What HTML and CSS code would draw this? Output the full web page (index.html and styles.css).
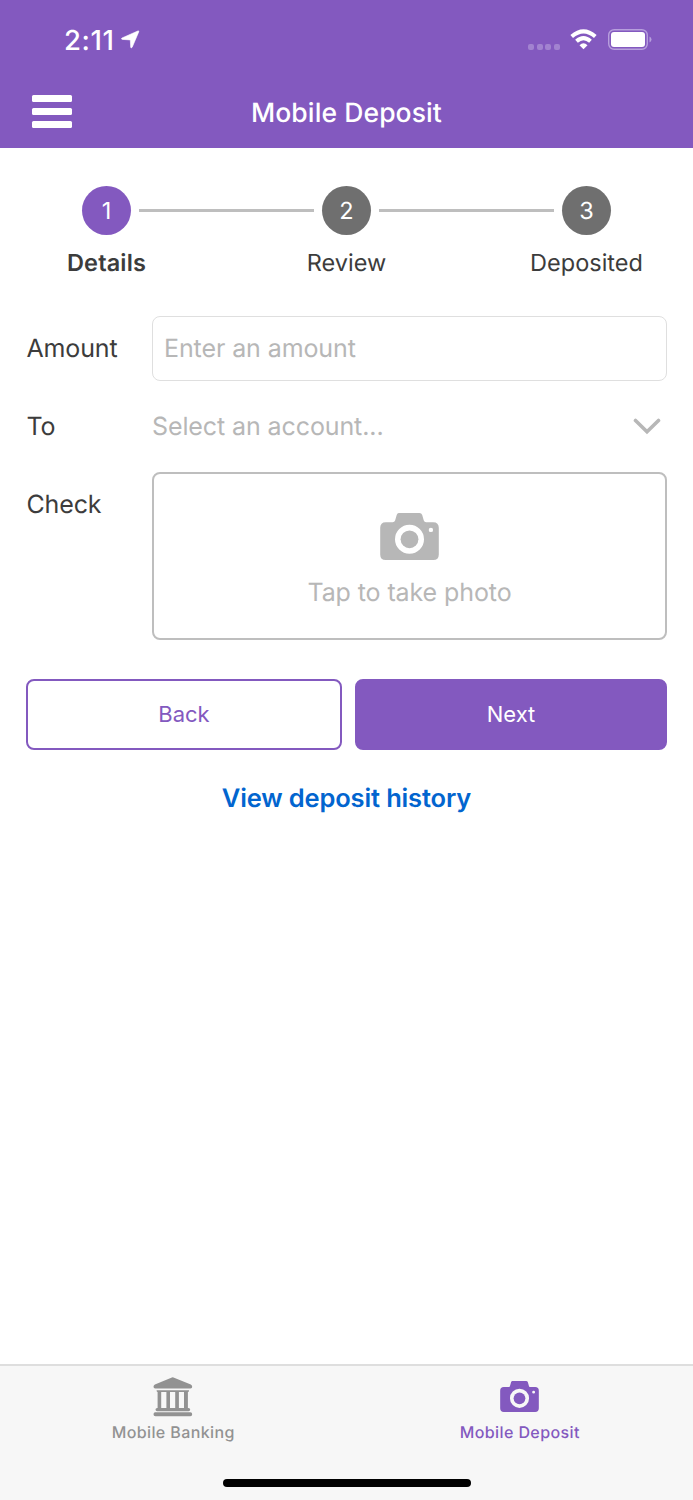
FILE: index.html
```html
<!DOCTYPE html>
<html lang="en">
<head>
<meta charset="utf-8">
<title>Mobile Deposit</title>
<link rel="stylesheet" href="styles.css">
</head>
<body>
<svg width="0" height="0" class="defs" aria-hidden="true">
  <symbol id="camera" viewBox="0 0 58.6 47">
    <path fill-rule="evenodd" d="M18.6 0H39.3Q41.3 0 42 2L43.6 7.4Q44.1 9.2 46 9.2H53Q58.6 9.2 58.6 14.8V41.4Q58.6 47 53 47H5.6Q0 47 0 41.4V14.8Q0 9.2 5.6 9.2H12.400Q14.300 9.200 14.900 7.400L16.500 2Q17.100 0 18.600 0ZM29.300 11.800A14.500 14.500 0 1 0 29.300 40.800A14.500 14.500 0 1 0 29.300 11.800ZM50.700 14.700A2.200 2.200 0 1 0 50.700 19.100A2.200 2.200 0 1 0 50.700 14.700Z"/>
    <circle cx="29.300" cy="26.300" r="8.900"/>
  </symbol>
</svg>
<div class="screen">
  <header class="header">
    <div class="status">
      <span class="time">2:11</span>
      <svg class="location" width="19" height="19" viewBox="0 0 19 19"><path d="M1 8L16.800 1Q18.200.5 17.700 1.900L11.200 17.200Q10.200 18.800 9.700 17.200L9.300 9.900L1.300 9.400Q-.2 8.800 1 8Z"/></svg>
      <span class="signal"><i></i><i></i><i></i><i></i></span>
      <svg class="wifi" width="27" height="21" viewBox="0 0 27 21"><path d="M1.700 7.400Q13.500-2.800 25.300 7.400M6.500 12.300Q13.500 6 20.500 12.300" fill="none" stroke="#fff" stroke-width="4"/><path d="M9.500 16.200Q13.500 12.400 17.500 16.200L13.500 20.300Z" fill="#fff"/></svg>
      <svg class="battery" width="44" height="21" viewBox="0 0 44 21"><rect x=".7" y=".7" width="38.600" height="19.600" rx="5.500" fill="none" stroke="#b79fdd" stroke-width="1.400"/><rect x="3" y="3" width="34" height="15" rx="3" fill="#fff"/><path d="M41.500 7.500Q43.500 8.500 43.500 10.500T41.500 13.500Z" fill="#b79fdd"/></svg>
    </div>
    <div class="nav">
      <button class="menu" aria-label="Menu"><i></i><i></i><i></i></button>
      <h1 class="title">Mobile Deposit</h1>
    </div>
  </header>
  <main class="main">
    <ol class="steps">
      <li class="step current"><span class="num">1</span><span class="step-label">Details</span></li>
      <li class="line"></li>
      <li class="step"><span class="num">2</span><span class="step-label">Review</span></li>
      <li class="line"></li>
      <li class="step"><span class="num">3</span><span class="step-label">Deposited</span></li>
    </ol>
    <div class="form">
      <span class="label">Amount</span>
      <div class="input">Enter an amount</div>
      <span class="label to">To</span>
      <div class="select"><span>Select an account...</span>
        <svg width="28" height="18" viewBox="0 0 28 18"><path d="M2.500 2.500L14 13.800L25.500 2.500" fill="none" stroke="#b7b7b7" stroke-width="3.600" stroke-linecap="round"/></svg>
      </div>
      <span class="label">Check</span>
      <div class="photo">
        <svg class="photo-icon"><use href="#camera"/></svg>
        <span class="tap">Tap to take photo</span>
      </div>
    </div>
    <div class="actions">
      <button class="btn back">Back</button>
      <button class="btn next">Next</button>
    </div>
    <a class="history">View deposit history</a>
  </main>
  <footer class="footer">
    <nav class="tabs">
      <a class="tab">
        <svg class="tab-icon bank" width="40" height="40" viewBox="0 0 40 40"><path d="M19.700.2Q20.100.2 20.500.4L37.800 7.500Q39.200 8.200 39.200 9.700Q39.200 11.500 37.500 11.500H2.200Q.5 11.500 .5 9.700Q.5 8.200 1.900 7.500L18.900.4Q19.300.2 19.700.2ZM3.600 13.200H36.100Q36.300 15 35 15H34.900V31H35.500Q37.200 31 37.200 32.600T35.500 34.200H4.200Q2.500 34.200 2.500 32.600T4.200 31H4.600V15H4.500Q3.400 15 3.600 13.200ZM8.200 15V31H13.400V15ZM17 15V31H22.200V15ZM25.900 15V31H31V15ZM2.400 35.300H37.300Q39.200 35.300 39.200 37.200T37.300 39.200H2.400Q.5 39.200 .5 37.200T2.400 35.300Z" fill-rule="evenodd"/></svg>
        <span class="tab-label">Mobile Banking</span>
      </a>
      <a class="tab active">
        <svg class="tab-icon cam"><use href="#camera"/></svg>
        <span class="tab-label">Mobile Deposit</span>
      </a>
    </nav>
    <div class="home"></div>
  </footer>
</div>
</body>
</html>
```
FILE: styles.css
```css
* { box-sizing: border-box; }
body { margin: 0; font-family: Inter, "Liberation Sans", sans-serif; color: #3c3c3c; background: #fff; text-rendering: geometricPrecision; }
button { font: inherit; margin: 0; padding: 0; }
h1, ol { margin: 0; padding: 0; list-style: none; }
span, h1, a { white-space: nowrap; }
.defs { display: block; height: 0; }
.screen { width: 693px; height: 1500px; display: flex; flex-direction: column; }
.header { height: 148px; background: #8359bf; color: #fff; flex: none; }
.status { height: 77px; padding: 2px 41px 0 64px; display: flex; align-items: center; }
.time { font-size: 27.500px; font-weight: 500; line-height: 34px; width: 57px; letter-spacing: 0.6px; }
.location { fill: #fff; stroke: #fff; stroke-width: 0.6px; stroke-linejoin: round; }
.signal { display: flex; gap: 2.700px; margin: 14px 10px 0 auto; }
.signal i { width: 6px; height: 6px; border-radius: 2px; background: #a283d0; }
.wifi { margin-right: 11px; }
.nav { height: 71px; display: grid; grid-template-columns: 40px 1fr 40px; align-items: center; padding: 0 32px 2px; }
.menu { background: none; border: 0; display: flex; flex-direction: column; gap: 6px; width: 40px; }
.menu i { height: 7px; border-radius: 1.500px; background: #fff; }
.title { font-size: 26.500px; font-weight: 500; line-height: 32px; padding-top: 2px; text-align: center; letter-spacing: 0.1px; }
.main { flex: 1; padding: 38px 26px 0; }
.steps { display: flex; padding: 0 56px; align-items: flex-start; }
.step { width: 49px; flex: none; display: flex; flex-direction: column; align-items: center; }
.num { width: 49px; height: 49px; border-radius: 50%; background: #6f6f6f; color: #fff; font-size: 23.500px; line-height: 50px; text-align: center; }
.current .num { background: #8359bf; }
.line { flex: 1; height: 3px; background: #bebebe; margin: 23px 8px 0; }
.step-label { font-size: 23.500px; line-height: 30px; margin-top: 13px; }
.current .step-label { font-weight: 600; letter-spacing: 0.15px; }
.form { display: grid; grid-template-columns: 126px 1fr; grid-template-rows: 65px 91px 168px; margin-top: 38px; }
.label { font-size: 25px; line-height: 66px; padding-left: 0.500px; letter-spacing: -0.15px; }
.to { line-height: 93px; }
.input { border: 1px solid #dfdfdf; border-radius: 8px; padding-left: 11px; font-size: 25px; line-height: 64px; color: #b7b7b7; letter-spacing: -0.1px; }
.select { display: flex; align-items: center; justify-content: space-between; color: #b7b7b7; font-size: 25px; letter-spacing: -0.1px; padding-right: 6px; }
.photo { border: 2px solid #bebebe; border-radius: 8px; display: flex; flex-direction: column; align-items: center; padding-top: 39px; color: #b7b7b7; }
.photo-icon { width: 59px; height: 47px; fill: #b7b7b7; }
.tap { font-size: 25px; line-height: 32px; margin-top: 17px; letter-spacing: -0.1px; }
.actions { display: grid; grid-template-columns: 316px 312px; gap: 13px; margin-top: 39px; }
.btn { height: 71px; border-radius: 8px; font-size: 22px; line-height: 67px; border: 2px solid #8359bf; }
.back { color: #8359bf; background: #fff; }
.next { color: #fff; background: #8359bf; }
.history { display: block; text-align: center; color: #0265cf; font-weight: 600; font-size: 25.500px; line-height: 32px; margin-top: 33px; letter-spacing: -0.15px; }
.footer { height: 136px; background: #f7f7f7; border-top: 2px solid #dedede; flex: none; }
.tabs { display: grid; grid-template-columns: 1fr 1fr; height: 117px; }
.tab { display: flex; flex-direction: column; align-items: center; color: #929292; fill: #929292; padding-top: 11px; }
.active { color: #8359bf; fill: #8359bf; }
.tab-icon { height: 40px; flex: none; }
.bank { margin: -0.500px 0 0.500px; }
.cam { width: 39px; height: 31px; margin: 4px 0 5px; }
.tab-label { font-size: 16px; line-height: 20px; margin-top: 5px; font-weight: 450; letter-spacing: 0.4px; }
.home { width: 248px; height: 8px; border-radius: 4px; background: #000; margin: -4px auto 0; }
```
